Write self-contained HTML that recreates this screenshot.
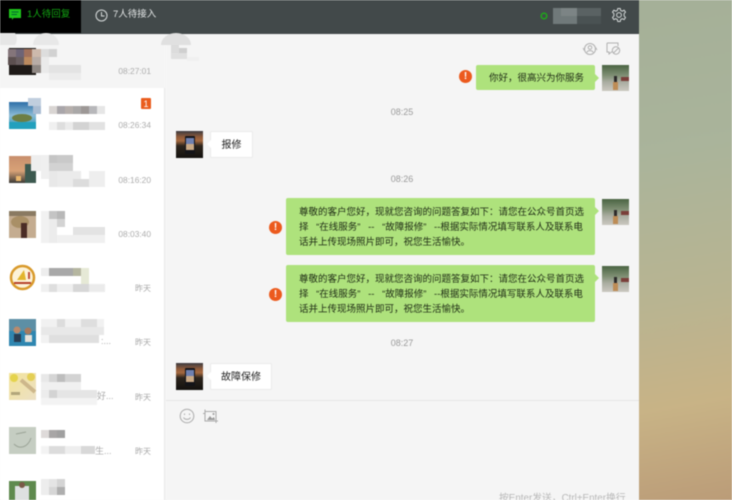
<!DOCTYPE html>
<html lang="zh"><head><meta charset="utf-8"><title>客服</title>
<style>
html,body{margin:0;padding:0}
body{width:732px;height:500px;overflow:hidden;position:relative;background:#f5f5f5;font-family:"Liberation Sans","Noto Sans CJK SC",sans-serif}
#w{position:absolute;left:0;top:0;width:732px;height:500px;overflow:hidden;filter:blur(.5px)}
#w div,#w svg{position:absolute}
.bg{left:639px;top:0;width:93px;height:500px;background:linear-gradient(170deg,#a5b098 0%,#aab49b 30%,#b9b491 60%,#c8b386 80%,#bb9c78 100%)}
.top{left:0;top:0;width:639px;height:34px;background:#42494a}
.act{left:0;top:0;width:81px;height:33px;background:#000}
.side{left:0;top:34px;width:165px;height:466px;background:#fff;border-right:1px solid #e8e8e8;box-sizing:border-box}
.sel{left:0;top:34px;width:165px;height:54px;background:#f5f5f5}
.chat{left:166px;top:34px;width:473px;height:466px;background:#f5f5f5}
.t{font-size:9.5px;line-height:12px;white-space:nowrap}
.bub{background:#aee27c;color:#1d2a14;border-radius:2px;font-size:9.5px;line-height:15px;white-space:nowrap;box-sizing:border-box}
.bub:after,.l:before{content:"";position:absolute;width:0;height:0;border:4px solid transparent}
.bub:after{left:100%;top:9px;border-left-color:#aee27c}
.l{background:#fff;border:1px solid #ebebeb;border-radius:2px;color:#222;font-size:10px;line-height:27px;text-align:center;box-sizing:border-box;white-space:nowrap}
.l:before{right:100%;top:8px;border-right-color:#fff}
.c{color:#9a9a9a;font-size:9px;line-height:12px;left:372px;width:60px;text-align:center}
.ex{width:13px;height:13px;border-radius:50%;background:#ec5a1d;color:#fff;font-size:10px;line-height:13px;font-weight:bold;text-align:center}
.sp{word-spacing:5px}
</style></head><body><div id="w">
<div class="bg"></div>
<div class="side"></div><div class="sel"></div><div class="chat"></div>
<div class="top"></div><div class="act"></div>

<svg style="left:9px;top:9px" width="12" height="12" viewBox="0 0 12 12"><path d="M0 0H12V9H4.500L3 11V9H0Z" fill="#1fc41c"/><path d="M2.500 3H9.500M2.500 5.500H8" stroke="#063" stroke-width="1"/></svg>
<div class="t" style="left:27px;top:8.500px;color:#12a612;font-size:9.500px;line-height:12px">1人待回复</div>
<svg style="left:95px;top:9px" width="13" height="13" viewBox="0 0 13 13" fill="none" stroke="#d8dcdc"><circle cx="6.500" cy="6.500" r="5.500"/><path d="M6.500 3V7H9.500"/></svg>
<div class="t" style="left:113px;top:8.500px;color:#e4e7e7;font-size:9.500px">7人待接入</div>

<svg style="left:540px;top:12px" width="8" height="8" viewBox="0 0 8 8"><circle cx="4" cy="4" r="2.800" fill="none" stroke="#1fa51c" stroke-width="1.600"/></svg>
<svg style="left:553px;top:8px" width="50" height="16"><rect width="24" height="16" fill="#70797a"/><rect x="8" width="16" height="8" fill="#7c8485"/><rect x="24" width="24" height="8" fill="#5a6263"/><rect x="24" y="8" width="24" height="8" fill="#4a5253"/></svg>
<svg style="left:611px;top:7px" width="16" height="16" viewBox="0 0 16 16" fill="none" stroke="#d5d9d9" stroke-width="1"><path d="M6.800 1.500H9.200L9.700 3.500L11.300 4.200L13.100 3.200L14.500 5.100L13.100 6.700V8.900L14.500 10.500L13.100 12.600L11.300 11.700L9.700 12.500L9.200 14.500H6.800L6.300 12.500L4.700 11.700L2.900 12.600L1.500 10.500L2.900 8.900V6.700L1.500 5.100L2.900 3.200L4.700 4.200L6.300 3.500Z"/><circle cx="8" cy="8" r="2.400"/></svg>

<svg style="left:0;top:33px" width="200" height="32"><path d="M0 0H15A11 11 0 0 1 15 12H0Z" fill="#e6e6e6"/><path d="M33 12A13 12 0 0 1 59 12Z" fill="#e8e8e8"/><path d="M161 12A15 12 0 0 1 191 12Z" fill="#e0e0e0"/><rect x="171" y="12" width="8" height="8" fill="#dcdcdc"/><rect x="179" y="15" width="8" height="8" fill="#cfcfcf"/><rect x="171" y="20" width="16" height="6" fill="#e0e0e0"/><rect x="187" y="24" width="12" height="4" fill="#f0f0f0"/></svg>

<!-- list avatars and mosaics -->
<svg style="left:0;top:34px" width="165" height="466">
<defs>
<linearGradient id="sea" x1="0" y1="0" x2="0" y2="1"><stop offset="0" stop-color="#2d6fa8"/><stop offset=".5" stop-color="#8cbcd6"/><stop offset="1" stop-color="#1f8fb0"/></linearGradient>
<linearGradient id="sun" x1="0" y1="0" x2="0" y2="1"><stop offset="0" stop-color="#c88f6d"/><stop offset=".55" stop-color="#d8a277"/><stop offset="1" stop-color="#3b3a36"/></linearGradient>
<linearGradient id="egg" x1="0" y1="0" x2="1" y2="1"><stop offset="0" stop-color="#f3e49a"/><stop offset="1" stop-color="#ece0c4"/></linearGradient>
</defs>
<!-- 1 -->
<rect x="9" y="14" width="27" height="27" fill="#1e1a18"/>
<rect x="8" y="15" width="8" height="8" fill="#84757a"/><rect x="16" y="15" width="8" height="8" fill="#6d6476"/><rect x="24" y="15" width="8" height="8" fill="#a0715c"/><rect x="32" y="15" width="9" height="8" fill="#cdb9ac"/>
<rect x="8" y="23" width="8" height="8" fill="#5c5050"/><rect x="16" y="23" width="8" height="8" fill="#6a5f61"/><rect x="24" y="23" width="8" height="8" fill="#bb8a5f"/><rect x="32" y="23" width="9" height="8" fill="#b8aca6"/>
<rect x="32" y="31" width="9" height="8" fill="#8f8884"/>
<rect x="41" y="15" width="16" height="8" fill="#ddd"/><rect x="49" y="15" width="8" height="8" fill="#d2d2d2"/><rect x="41" y="23" width="8" height="16" fill="#eaeaea"/><rect x="49" y="31" width="32" height="8" fill="#e3e3e3"/><rect x="49" y="39" width="32" height="7" fill="#ececec"/>
<text x="151" y="40" text-anchor="end" font-size="8.400" fill="#adadad">08:27:01</text>
<!-- 2 -->
<rect x="9" y="68" width="27" height="27" fill="url(#sea)"/><ellipse cx="22" cy="84" rx="10" ry="4" fill="#6d7e44"/><rect x="9" y="88" width="27" height="7" fill="#23a0bd"/>
<rect x="28" y="64" width="13" height="8" fill="#c0cede"/><rect x="33" y="72" width="8" height="8" fill="#a9bcd2"/>
<rect x="49" y="72" width="8" height="8" fill="#d9d5d3"/><rect x="57" y="72" width="8" height="8" fill="#a9a6aa"/><rect x="65" y="72" width="8" height="8" fill="#b6afac"/><rect x="73" y="72" width="8" height="8" fill="#aaa8a8"/><rect x="81" y="72" width="8" height="8" fill="#9d9896"/><rect x="89" y="72" width="8" height="8" fill="#b7b7ba"/><rect x="97" y="72" width="8" height="8" fill="#e6e6e6"/>
<rect x="49" y="88" width="8" height="8" fill="#f0f0f0"/><rect x="57" y="88" width="8" height="8" fill="#dedede"/><rect x="65" y="88" width="8" height="8" fill="#ebebeb"/><rect x="73" y="88" width="16" height="8" fill="#d3d3d3"/><rect x="89" y="88" width="16" height="8" fill="#e2e2e2"/>
<rect x="141" y="64" width="10" height="11" rx="1" fill="#ea5c1c"/><text x="146" y="73" text-anchor="middle" font-size="9" fill="#fff">1</text>
<text x="151" y="94" text-anchor="end" font-size="8.400" fill="#adadad">08:26:34</text>
<!-- 3 -->
<rect x="9" y="122" width="27" height="27" fill="url(#sun)"/><rect x="25" y="130" width="11" height="19" fill="#3d5a50"/><rect x="16" y="142" width="5" height="5" fill="#e8b56c"/>
<rect x="31" y="121" width="10" height="16" fill="#eee"/><rect x="41" y="121" width="8" height="24" fill="#efefef"/><rect x="49" y="121" width="8" height="8" fill="#c5c5c5"/><rect x="57" y="121" width="16" height="8" fill="#c9c9c9"/><rect x="49" y="129" width="24" height="8" fill="#d2d2d2"/><rect x="49" y="137" width="8" height="16" fill="#e8e8e8"/><rect x="57" y="137" width="24" height="16" fill="#ebebeb"/><rect x="73" y="145" width="16" height="8" fill="#dcdcdc"/><rect x="89" y="137" width="16" height="16" fill="#eeeeee"/>
<text x="151" y="149" text-anchor="end" font-size="8.400" fill="#adadad">08:16:20</text>
<!-- 4 -->
<rect x="9" y="177" width="27" height="27" fill="#c4ac90"/><rect x="9" y="177" width="27" height="5" fill="#8a7a62"/><ellipse cx="20" cy="188" rx="9" ry="6" fill="#a98f66"/><rect x="21" y="189" width="6" height="15" fill="#4b2c26"/>
<rect x="41" y="177" width="8" height="32" fill="#f1f1f1"/><rect x="49" y="177" width="16" height="8" fill="#c4c4c4"/><rect x="57" y="177" width="8" height="8" fill="#b8b8b8"/><rect x="57" y="185" width="8" height="8" fill="#d3d3d3"/><rect x="49" y="185" width="8" height="24" fill="#ececec"/><rect x="73" y="193" width="32" height="8" fill="#e3e3e3"/><rect x="57" y="201" width="48" height="8" fill="#f0f0f0"/>
<text x="151" y="203" text-anchor="end" font-size="8.400" fill="#adadad">08:03:40</text>
<!-- 5 -->
<circle cx="22.500" cy="243.500" r="13" fill="#fff"/><circle cx="22.500" cy="243.500" r="11.500" fill="#fdf3d8" stroke="#d99a2c" stroke-width="2.500"/><path d="M17 246L24 236L26 246Z" fill="#e2b52c"/><rect x="14" y="248" width="17" height="2" fill="#b5402a"/><rect x="28" y="238" width="2" height="7" fill="#c0503a"/>
<rect x="41" y="234" width="8" height="8" fill="#ededed"/><rect x="49" y="234" width="24" height="8" fill="#a8a8a8"/><rect x="73" y="234" width="8" height="8" fill="#b5b6a0"/><rect x="81" y="234" width="8" height="24" fill="#e6e9d6"/><rect x="41" y="250" width="8" height="8" fill="#f0f0f0"/><rect x="49" y="250" width="8" height="8" fill="#dedede"/><rect x="57" y="250" width="16" height="8" fill="#efefef"/><rect x="73" y="250" width="16" height="8" fill="#d7d7d7"/><rect x="89" y="250" width="16" height="8" fill="#ebebeb"/>
<text x="151" y="257" text-anchor="end" font-size="8" fill="#a8a8a8">昨天</text>
<!-- 6 -->
<rect x="9" y="285" width="27" height="27" fill="#5d8fa5"/><rect x="9" y="297" width="27" height="15" fill="#2f86b0"/><circle cx="17" cy="296" r="3.500" fill="#b98a6c"/><circle cx="28" cy="297" r="3.500" fill="#a87a5e"/><rect x="14" y="300" width="7" height="8" fill="#293d52"/><rect x="25" y="301" width="7" height="7" fill="#e6e2da"/>
<rect x="41" y="285" width="63" height="8" fill="#f1f1f1"/><rect x="57" y="285" width="8" height="8" fill="#dcdcdc"/><rect x="81" y="285" width="16" height="8" fill="#dedede"/><rect x="41" y="293" width="63" height="8" fill="#e8e8e8"/><rect x="41" y="301" width="8" height="8" fill="#f2f2f2"/><rect x="49" y="301" width="50" height="8" fill="#dfdfdf"/>
<text x="101" y="310" font-size="9" fill="#aaa">:...</text>
<text x="151" y="311" text-anchor="end" font-size="8" fill="#a8a8a8">昨天</text>
<!-- 7 -->
<rect x="9" y="339" width="27" height="27" fill="url(#egg)"/><circle cx="14" cy="344" r="4" fill="#e5d34c"/><circle cx="31" cy="343" r="4" fill="#e4cf55"/><path d="M21 346L35 358" stroke="#cdb78b" stroke-width="4"/><rect x="11" y="358" width="9" height="3" fill="#b2a67b"/>
<rect x="41" y="340" width="8" height="8" fill="#e8e8e8"/><rect x="49" y="340" width="8" height="8" fill="#d5d5d5"/><rect x="57" y="340" width="8" height="8" fill="#bdbdbd"/><rect x="65" y="340" width="16" height="8" fill="#d3d3d3"/><rect x="41" y="348" width="40" height="8" fill="#f0f0f0"/><rect x="41" y="356" width="8" height="8" fill="#ececec"/><rect x="49" y="356" width="8" height="8" fill="#d3d3d3"/><rect x="57" y="356" width="40" height="8" fill="#e5e5e5"/><rect x="41" y="364" width="56" height="7" fill="#f3f3f3"/>
<text x="97" y="365" font-size="9" fill="#aaa">好...</text>
<text x="151" y="366" text-anchor="end" font-size="8" fill="#a8a8a8">昨天</text>
<!-- 8 -->
<rect x="9" y="393" width="27" height="27" fill="#c5cdc2"/><path d="M16 400L26 398M14 410C20 416 28 413 31 404" stroke="#9aa396" fill="none"/>
<rect x="41" y="396" width="8" height="8" fill="#dedad9"/><rect x="49" y="396" width="8" height="8" fill="#a8a6a6"/><rect x="57" y="396" width="8" height="8" fill="#a0a0a0"/>
<rect x="41" y="412" width="8" height="8" fill="#f3f3f3"/><rect x="49" y="412" width="16" height="8" fill="#dcdcdc"/><rect x="65" y="412" width="16" height="8" fill="#eeeeee"/><rect x="81" y="412" width="14" height="8" fill="#d8d8d8"/>
<text x="95" y="420" font-size="9" fill="#aaa">生...</text>
<text x="151" y="420" text-anchor="end" font-size="8" fill="#a8a8a8">昨天</text>
<!-- 9 -->
<rect x="9" y="447" width="27" height="19" fill="#5f8a4e"/><rect x="15" y="452" width="14" height="14" fill="#dde0e0"/><circle cx="22" cy="451" r="3" fill="#7a5a48"/>
<rect x="41" y="445" width="8" height="16" fill="#ededed"/><rect x="49" y="445" width="8" height="8" fill="#e4e4e4"/><rect x="57" y="445" width="8" height="8" fill="#d4d4d4"/><rect x="49" y="453" width="8" height="8" fill="#d6d6d6"/><rect x="57" y="453" width="8" height="8" fill="#aeaeae"/>
</svg>

<!-- chat toolbar icons -->
<svg style="left:582px;top:41px" width="40" height="16" viewBox="0 0 40 16" fill="none" stroke="#b0b0b0"><circle cx="8" cy="8" r="5.500"/><circle cx="8" cy="6.500" r="1.800"/><path d="M5 11.500C5 9 11 9 11 11.500"/><path d="M1 7L2 9L3 7M13 9L14 7L15 9" stroke-width=".8"/><path d="M25 2H36V5M25 2V11H27V13L29.500 11H30"/><circle cx="34" cy="9.500" r="3.700"/><path d="M31.500 12L36.500 7"/></svg>

<!-- outgoing avatars -->
<svg width="0" height="0" style="left:0;top:0"><defs><linearGradient id="st" x1="0" y1="0" x2="0" y2="1"><stop offset="0" stop-color="#4a6442"/><stop offset=".4" stop-color="#7f8f74"/><stop offset=".65" stop-color="#a9aca0"/><stop offset="1" stop-color="#cbc8c0"/></linearGradient></defs></svg>
<svg style="left:602px;top:65px" width="27" height="26"><rect width="27" height="26" fill="url(#st)"/><rect x="19" y="12" width="8" height="4" fill="#7a3f3a"/><rect x="12" y="11" width="3" height="6" fill="#2c2a2a"/><rect x="11" y="17" width="5" height="8" fill="#bd8c56"/></svg>
<svg style="left:602px;top:199px" width="27" height="26"><rect width="27" height="26" fill="url(#st)"/><rect x="19" y="12" width="8" height="4" fill="#7a3f3a"/><rect x="12" y="11" width="3" height="6" fill="#2c2a2a"/><rect x="11" y="17" width="5" height="8" fill="#bd8c56"/></svg>
<svg style="left:602px;top:266px" width="27" height="26"><rect width="27" height="26" fill="url(#st)"/><rect x="19" y="12" width="8" height="4" fill="#7a3f3a"/><rect x="12" y="11" width="3" height="6" fill="#2c2a2a"/><rect x="11" y="17" width="5" height="8" fill="#bd8c56"/></svg>
<!-- incoming avatars -->
<svg style="left:176px;top:131px" width="27" height="27"><defs><linearGradient id="ph" x1="0" y1="0" x2="0" y2="1"><stop offset="0" stop-color="#3c3a40"/><stop offset=".22" stop-color="#8f5a3a"/><stop offset=".36" stop-color="#a5693f"/><stop offset=".55" stop-color="#2c241c"/><stop offset="1" stop-color="#13110e"/></linearGradient></defs><rect width="27" height="27" fill="url(#ph)"/><rect x="9" y="5" width="10" height="18" rx="1" fill="#141418"/><rect x="10" y="7" width="8" height="12" fill="#6f80b0"/><rect x="10" y="13" width="8" height="6" fill="#c9a986"/></svg>
<svg style="left:176px;top:363px" width="27" height="27"><rect width="27" height="27" fill="url(#ph)"/><rect x="9" y="5" width="10" height="18" rx="1" fill="#141418"/><rect x="10" y="7" width="8" height="12" fill="#6f80b0"/><rect x="10" y="13" width="8" height="6" fill="#c9a986"/></svg>

<div class="ex" style="left:459px;top:70px">!</div>
<div class="bub" style="left:476px;top:65px;width:119px;height:25px;padding:6px 0 0 13px">你好，很高兴为你服务</div>
<div class="c" style="top:106px">08:25</div>
<div class="l" style="left:210px;top:131px;width:43px;height:27px">报修</div>
<div class="c" style="top:173px">08:26</div>
<div class="ex" style="left:269px;top:221px">!</div>
<div class="bub" style="left:286px;top:198px;width:309px;height:57px;padding:7px 0 0 13px">尊敬的客户您好，现就您咨询的问题答复如下：请您在公众号首页选<br><span class="sp">择 “在线服务” -- “故障报修” --根据实际情况填写联系人及联系电</span><br>话并上传现场照片即可，祝您生活愉快。</div>
<div class="ex" style="left:269px;top:288px">!</div>
<div class="bub" style="left:286px;top:265px;width:309px;height:57px;padding:7px 0 0 13px">尊敬的客户您好，现就您咨询的问题答复如下：请您在公众号首页选<br><span class="sp">择 “在线服务” -- “故障报修” --根据实际情况填写联系人及联系电</span><br>话并上传现场照片即可，祝您生活愉快。</div>
<div class="c" style="top:337px">08:27</div>
<div class="l" style="left:210px;top:363px;width:62px;height:27px">故障保修</div>

<div style="left:166px;top:400px;width:473px;height:1px;background:#e6e6e6"></div>
<svg style="left:179px;top:408px" width="42" height="16" viewBox="0 0 42 16" fill="none" stroke="#aaa"><circle cx="8" cy="8" r="6.800"/><path d="M4.500 9.500C6 12 10 12 11.500 9.500"/><path d="M5.500 5.500V7M10.500 5.500V7"/><path d="M26 3.500H37V13H26Z"/><path d="M24 5.500H26M26 1.500V3.500M37 13H39M37 13V15"/><path d="M28 12L31 8L33 10.500L35 9L36 12Z" fill="#999" stroke="none"/><circle cx="34.500" cy="6" r="1" fill="#999" stroke="none"/></svg>
<div class="t" style="left:499px;top:491px;color:#b8b8b8;font-size:9.800px;line-height:16px">按Enter发送，Ctrl+Enter换行</div>
</div></body></html>
